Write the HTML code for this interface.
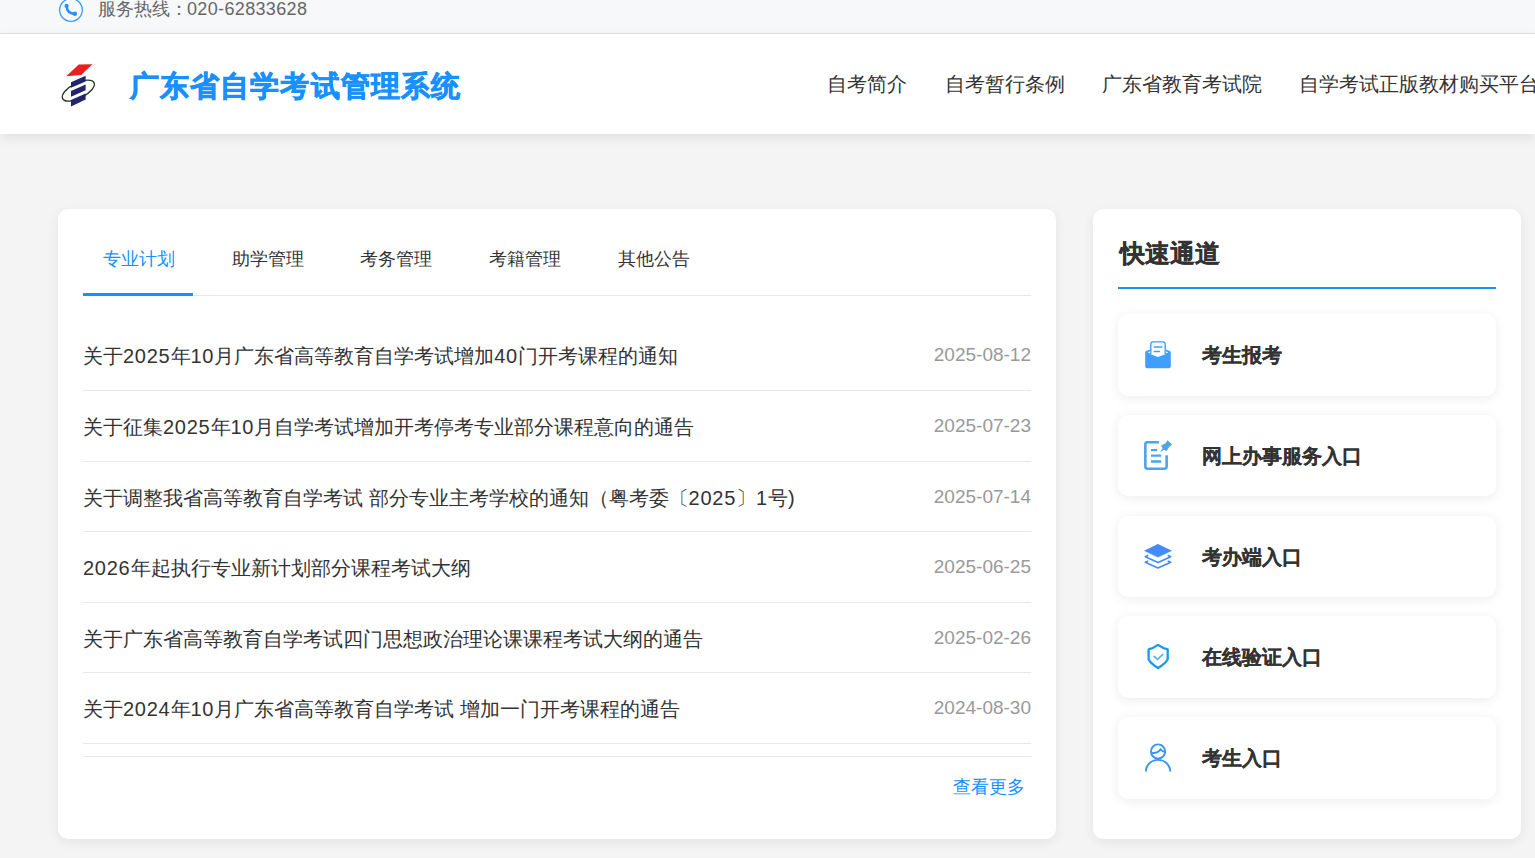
<!DOCTYPE html>
<html lang="zh">
<head>
<meta charset="utf-8">
<title>广东省自学考试管理系统</title>
<style>
*{margin:0;padding:0;box-sizing:border-box;}
html,body{width:1535px;height:858px;overflow:hidden;}
body{background:#f4f4f4;font-family:"Liberation Sans",sans-serif;color:#333;position:relative;}
.topbar{position:absolute;left:0;top:0;width:1535px;height:34px;background:#f7f8fa;border-bottom:1px solid #e4e4e4;}
.topbar svg{position:absolute;left:58px;top:-3px;}
.topbar .hot{position:absolute;left:98px;top:-3px;font-size:18px;line-height:24px;color:#666;white-space:nowrap;}
.header{position:absolute;left:0;top:34px;width:1535px;height:100px;background:#fff;box-shadow:0 3px 12px rgba(0,0,0,0.09);}
.logo{position:absolute;left:56px;top:28px;}
.title{position:absolute;left:130px;top:32px;font-size:29px;line-height:40px;font-weight:bold;color:#1890ff;white-space:nowrap;letter-spacing:1.1px;-webkit-text-stroke:0.7px #1890ff;}
.nav{position:absolute;left:827px;top:37px;white-space:nowrap;font-size:20px;line-height:26px;color:#333;}
.nav span{display:inline-block;margin-right:38px;}
.card{position:absolute;background:#fff;border-radius:10px;box-shadow:0 3px 12px rgba(0,0,0,0.07);}
.left{left:58px;top:209px;width:998px;height:630px;}
.tabs{position:absolute;left:25px;top:0;width:948px;height:87px;border-bottom:1px solid #e8e8e8;}
.tab{position:absolute;top:38px;font-size:18px;line-height:24px;color:#333;white-space:nowrap;}
.tab.active{color:#1890ff;}
.tabline{position:absolute;left:0;top:84px;width:110px;height:3px;background:#1890ff;}
.list{position:absolute;left:25px;top:111px;width:948px;}
.row{position:relative;border-bottom:1px solid #e8e8e8;}
.row .t{position:absolute;left:0;top:23px;font-size:20px;line-height:26px;color:#333;white-space:nowrap;}
.dg{font-style:normal;letter-spacing:0.75px;}
.row .d{position:absolute;right:0;top:22px;font-size:19px;line-height:26px;color:#999;white-space:nowrap;}
.more-line{position:absolute;left:25px;top:547px;width:948px;height:1px;background:#e8e8e8;}
.more{position:absolute;right:31px;top:566px;font-size:18px;line-height:24px;color:#1890ff;white-space:nowrap;}
.right{left:1093px;top:209px;width:428px;height:630px;}
.qt{position:absolute;left:27px;top:27px;font-size:25px;line-height:34px;font-weight:bold;color:#333;white-space:nowrap;-webkit-text-stroke:0.3px #333;}
.qline{position:absolute;left:25px;top:78px;width:378px;height:2px;background:#1890ff;}
.qi{position:absolute;left:25px;width:378px;height:81.6px;background:#fff;border-radius:10px;box-shadow:0 2px 12px rgba(0,0,0,0.08);}
.qi svg{position:absolute;left:0;top:0;}
.qi .n{position:absolute;left:84px;top:28px;font-size:20px;line-height:26px;font-weight:bold;color:#333;white-space:nowrap;-webkit-text-stroke:0.15px #333;}
</style>
</head>
<body>
<div class="topbar">
  <svg width="26" height="26" viewBox="0 0 26 26">
    <circle cx="12.95" cy="13" r="11.35" fill="none" stroke="#3d9cf5" stroke-width="1.3"/>
    <path d="M8.6,9.2 Q8.9,16.2 16.6,16.9" fill="none" stroke="#2a92f7" stroke-width="2.6" stroke-linecap="round"/>
    <circle cx="8.6" cy="8.9" r="2.1" fill="#2a92f7"/>
    <circle cx="16.9" cy="16.8" r="2.2" fill="#2a92f7"/>
  </svg>
  <div class="hot">服务热线：<span style="letter-spacing:0.35px;margin-left:-1px">020-62833628</span></div>
</div>

<div class="header">
  <svg class="logo" width="44" height="48" viewBox="56 62 44 48">
    <path d="M78.8 64.6 L92.5 64.3 L81.2 75.0 L66.2 76.2 Z" fill="#e8201f"/>
    <ellipse cx="78.3" cy="90.6" rx="17.6" ry="7.6" transform="rotate(-27 78.3 90.6)" fill="none" stroke="#1f3a1a" stroke-width="1.3"/>
    <path d="M71 82.2 L85.6 75.7 L85.6 81.4 L71 87.8 Z" fill="#23236e"/>
    <path d="M71 91.0 L85.6 84.6 L85.6 90.3 L71 96.7 Z" fill="#23236e"/>
    <path d="M71 100.0 L85.6 93.6 L85.6 99.4 L71 106.6 Z" fill="#23236e"/>
  </svg>
  <div class="title">广东省自学考试管理系统</div>
  <div class="nav"><span>自考简介</span><span style="margin-right:37px">自考暂行条例</span><span style="margin-right:37px">广东省教育考试院</span><span>自学考试正版教材购买平台</span></div>
</div>

<div class="card left">
  <div class="tabs">
    <div class="tab active" style="left:20px">专业计划</div>
    <div class="tab" style="left:149px">助学管理</div>
    <div class="tab" style="left:277px">考务管理</div>
    <div class="tab" style="left:406px">考籍管理</div>
    <div class="tab" style="left:535px">其他公告</div>
    <div class="tabline"></div>
  </div>
  <div class="list">
    <div class="row" style="height:71px"><div class="t">关于<i class="dg">2025</i>年<i class="dg">10</i>月广东省高等教育自学考试增加<i class="dg">40</i>门开考课程的通知</div><div class="d">2025-08-12</div></div>
    <div class="row" style="height:71px"><div class="t">关于征集<i class="dg">2025</i>年<i class="dg">10</i>月自学考试增加开考停考专业部分课程意向的通告</div><div class="d">2025-07-23</div></div>
    <div class="row" style="height:70px"><div class="t">关于调整我省高等教育自学考试 部分专业主考学校的通知（粤考委〔<i class="dg">2025</i>〕<i class="dg">1</i>号)</div><div class="d">2025-07-14</div></div>
    <div class="row" style="height:71px"><div class="t"><i class="dg">2026</i>年起执行专业新计划部分课程考试大纲</div><div class="d">2025-06-25</div></div>
    <div class="row" style="height:70px"><div class="t">关于广东省高等教育自学考试四门思想政治理论课课程考试大纲的通告</div><div class="d">2025-02-26</div></div>
    <div class="row" style="height:71px"><div class="t">关于<i class="dg">2024</i>年<i class="dg">10</i>月广东省高等教育自学考试 增加一门开考课程的通告</div><div class="d">2024-08-30</div></div>
  </div>
  <div class="more-line"></div>
  <div class="more">查看更多</div>
</div>

<div class="card right">
  <div class="qt">快速通道</div>
  <div class="qline"></div>
  <div class="qi" style="top:105px">
    <svg width="60" height="81.6" viewBox="1118 314 60 81.6"><path d="M1150.8,354 V344.2 Q1150.8,341.9 1153.1,341.9 H1162.9 Q1165.2,341.9 1165.2,344.2 V354" fill="none" stroke="#409eff" stroke-width="1.4"/>
<path d="M1145.2,352.4 Q1145.2,351.3 1146.2,350.9 L1150.1,349.4 V353.9 L1158,356.9 L1165.9,353.9 V349.4 L1169.8,350.9 Q1170.8,351.3 1170.8,352.4 V366.3 Q1170.8,368.3 1168.8,368.3 H1147.2 Q1145.2,368.3 1145.2,366.3 Z" fill="#409eff"/>
<path d="M1147.6,352.5 L1150.1,351.2 V353.3 Z M1168.4,352.5 L1165.9,351.2 V353.3 Z" fill="#fff"/>
<path d="M1154.3,346.9 H1161.7 M1154.3,351.4 H1159.4" stroke="#409eff" stroke-width="1.5" stroke-linecap="round" fill="none"/></svg>
    <div class="n">考生报考</div>
  </div>
  <div class="qi" style="top:205.8px">
    <svg width="60" height="81.6" viewBox="1118 414.8 60 81.6"><path d="M1158.9,442.05 H1147.5 Q1145.35,442.05 1145.35,444.2 V466.4 Q1145.35,468.55 1147.5,468.55 H1164.5 Q1166.65,468.55 1166.65,466.4 V455.1" fill="none" stroke="#4fa4e6" stroke-width="2.6"/>
<path d="M1151,450 H1157.2 M1151,455.5 H1161.2 M1151,461.3 H1161.2" stroke="#4fa4e6" stroke-width="2.3" fill="none"/>
<path d="M1167.49,439.99 L1172.10,444.39 L1169.37,446.49 L1166.44,451.11 L1164.55,449.43 L1160.14,451.86 L1162.66,448.17 L1160.98,445.44 L1165.60,443.13 Z" fill="#4fa4e6"/></svg>
    <div class="n">网上办事服务入口</div>
  </div>
  <div class="qi" style="top:306.6px">
    <svg width="60" height="81.6" viewBox="1118 515.6 60 81.6"><path d="M1157.96,543.9 L1171.4,550.4 L1157.96,556.7 L1144.6,550.4 Z" fill="#418bff" stroke="#418bff" stroke-width="0.6" stroke-linejoin="round"/>
<path d="M1148.3,554.9 L1145.3,556.3 L1158,562 L1170.7,556.3 L1167.7,554.9 M1148.3,560.5 L1145.3,561.9 L1158,567.6 L1170.7,561.9 L1167.7,560.5" fill="none" stroke="#418bff" stroke-width="1.6" stroke-linejoin="round"/></svg>
    <div class="n">考办端入口</div>
  </div>
  <div class="qi" style="top:407.4px">
    <svg width="60" height="81.6" viewBox="1118 616.4 60 81.6"><path d="M1158.04,645.3 Q1153.5,648.6 1148.6,649.8 V659.6 Q1150.5,663.6 1158.04,668.4 Q1165.6,663.6 1167.7,659.6 V649.8 Q1162.6,648.6 1158.04,645.3 Z" fill="none" stroke="#1899f0" stroke-width="2.3" stroke-linejoin="round"/>
<path d="M1154.06,656.8 L1157.54,659.8 L1162.87,654.9" fill="none" stroke="#52b3ee" stroke-width="1.7" stroke-linecap="round" stroke-linejoin="round"/></svg>
    <div class="n">在线验证入口</div>
  </div>
  <div class="qi" style="top:508.2px">
    <svg width="60" height="81.6" viewBox="1118 717.2 60 81.6"><circle cx="1158.05" cy="751.7" r="7.1" fill="none" stroke="#3a95fb" stroke-width="1.9"/>
<path d="M1150.8,752.9 C1154.5,753.8 1158.2,752.8 1160.6,749.6 C1161.8,751.1 1163.5,752.1 1165.6,752.3" fill="none" stroke="#3a95fb" stroke-width="1.9"/>
<path d="M1145.9,771.7 A12.15,11.6 0 0 1 1170.2,771.7" fill="none" stroke="#3a95fb" stroke-width="1.9"/></svg>
    <div class="n">考生入口</div>
  </div>
</div>
</body>
</html>
